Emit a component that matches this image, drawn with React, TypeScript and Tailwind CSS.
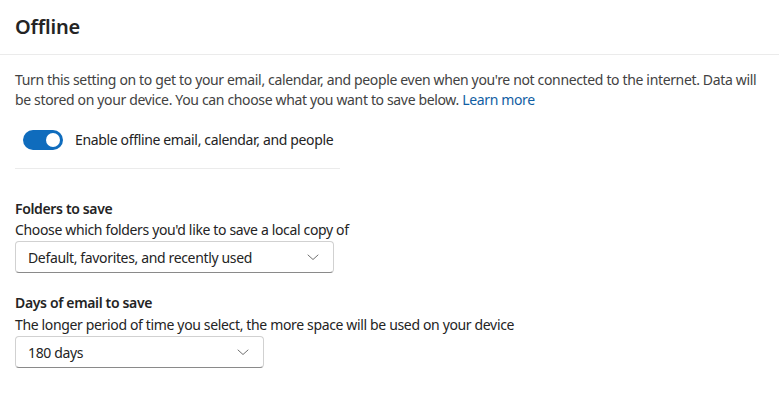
import React from "react";

function Chevron() {
  return (
    <svg width="12" height="12" viewBox="0 0 12 12" fill="none">
      <path d="M1 4 L6 8.5 L11 4" stroke="#707070" strokeWidth="1" strokeLinecap="round" strokeLinejoin="round" />
    </svg>
  );
}

function Dropdown({ label, width }: { label: string; width: string }) {
  return (
    <div className={`flex h-[32px] items-center justify-between rounded-[4px] border border-[#d1d1d1] border-b-[#8a8a8a] bg-white pl-[12px] pr-[14px] ${width}`}>
      <span className="text-[14px] text-[#242424]">{label}</span>
      <Chevron />
    </div>
  );
}

export default function App() {
  return (
    <div className="h-[397px] w-[779px] bg-white text-[#242424] tracking-[-0.35px]" style={{ fontFamily: '"Segoe UI", "Noto Sans", sans-serif' }}>
      <div className="flex h-[55px] items-center border-b border-[#ebebeb] px-[15px]">
        <h1 className="text-[20px] font-semibold leading-[28px] tracking-[-0.2px] text-[#242424]">Offline</h1>
      </div>
      <div className="pl-[15px] pr-[8px] pt-[15px]">
        <p className="text-[14px] leading-[20px] text-[#424242]">
          Turn this setting on to get to your email, calendar, and people even when you're not connected to the internet. Data will be stored on your device. You can choose what you want to save below.{" "}
          <span className="text-[#115ea3]">Learn more</span>
        </p>
        <div className="mt-[20px] flex items-center gap-[12px] pl-[8px]">
          <div className="flex h-[20px] w-[40px] items-center justify-end rounded-full bg-[#0f6cbd] pr-[3px]">
            <div className="h-[14px] w-[14px] rounded-full bg-white" />
          </div>
          <span className="text-[14px] leading-[20px]">Enable offline email, calendar, and people</span>
        </div>
        <div className="mt-[18px] h-px w-[325px] bg-[#ebebeb]" />
        <div className="mt-[30px]">
          <div className="text-[14px] font-semibold leading-[20px]">Folders to save</div>
          <div className="mt-[1px] text-[14px] leading-[20px]">Choose which folders you'd like to save a local copy of</div>
          <div className="mt-[1px]">
            <Dropdown label="Default, favorites, and recently used" width="w-[319px]" />
          </div>
        </div>
        <div className="mt-[20px]">
          <div className="text-[14px] font-semibold leading-[20px]">Days of email to save</div>
          <div className="mt-[2px] text-[14px] leading-[20px]">The longer period of time you select, the more space will be used on your device</div>
          <div className="mt-[1px]">
            <Dropdown label="180 days" width="w-[249px]" />
          </div>
        </div>
      </div>
    </div>
  );
}
